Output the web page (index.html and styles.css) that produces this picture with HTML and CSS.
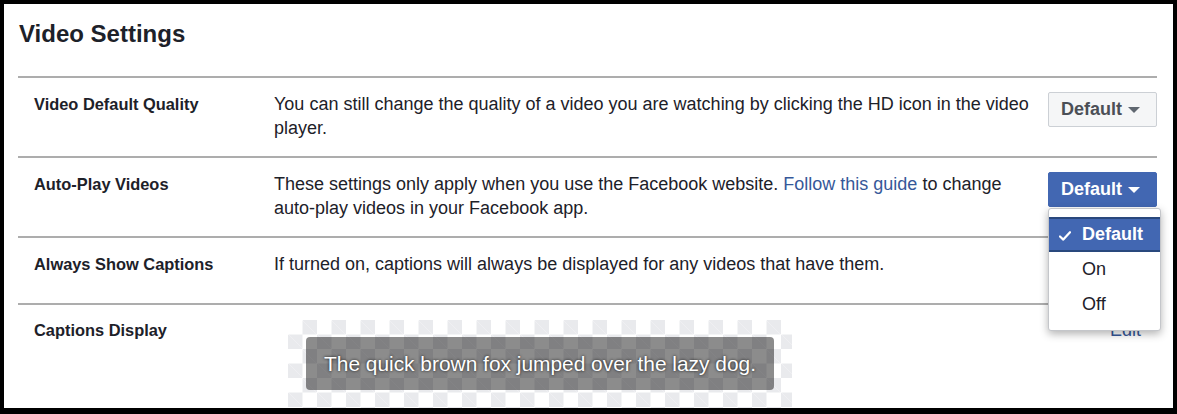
FILE: index.html
```html
<!DOCTYPE html>
<html lang="en">
<head>
<meta charset="utf-8">
<title>Video Settings</title>
<link rel="stylesheet" href="styles.css">
</head>
<body>
<div class="frame">
  <div class="settings">
    <h1 class="title">Video Settings</h1>

    <div class="row">
      <div class="label">Video Default Quality</div>
      <div class="desc">You can still change the quality of a video you are watching by clicking the HD icon in the video player.</div>
      <div class="control">
        <button class="btn btn-gray">Default<span class="caret"></span></button>
      </div>
    </div>

    <div class="row">
      <div class="label">Auto-Play Videos</div>
      <div class="desc">These settings only apply when you use the Facebook website. <a class="link" href="#">Follow this guide</a> to change auto-play videos in your Facebook app.</div>
      <div class="control has-menu">
        <button class="btn btn-blue">Default<span class="caret caret-white"></span></button>
        <ul class="menu">
          <li class="item selected">
            <svg class="check" width="12" height="10" viewBox="0 0 12 10"><path d="M1 5.5 L4.3 8.6 L11 1.2" fill="none" stroke="#fff" stroke-width="2.2" stroke-linecap="round" stroke-linejoin="round"/></svg>
            Default
          </li>
          <li class="item">On</li>
          <li class="item">Off</li>
        </ul>
      </div>
    </div>

    <div class="row">
      <div class="label">Always Show Captions</div>
      <div class="desc">If turned on, captions will always be displayed for any videos that have them.</div>
      <div class="control control-spacer"></div>
    </div>

    <div class="row row-last">
      <div class="label">Captions Display</div>
      <div class="preview-col">
        <div class="preview">
          <div class="caption">The quick brown fox jumped over the lazy dog.</div>
        </div>
      </div>
      <a class="edit" href="#">Edit</a>
    </div>
  </div>
</div>
</body>
</html>
```

FILE: styles.css
```css
html, body {
  margin: 0;
  padding: 0;
  background: #000;
  height: 414px;
  overflow: hidden;
}

body {
  font-family: "Liberation Sans", Arial, sans-serif;
  color: #1d2129;
}

.frame {
  margin: 4px 4px 0 4px;
  height: 404px;
  background: #fff;
  overflow: hidden;
}

.settings {
  padding: 16px 16px 0 14px;
}

.title {
  margin: 0 0 28px 1px;
  font-size: 24px;
  line-height: 28px;
  font-weight: bold;
  color: #1d2129;
}

.row {
  display: flex;
  align-items: flex-start;
  border-top: 2px solid #adadad;
  padding: 14px 0 16px 16px;
}

.label {
  width: 240px;
  flex: none;
  font-size: 16.4px;
  line-height: 24px;
  font-weight: bold;
  color: #1d2129;
}

.desc {
  width: 760px;
  flex: none;
  font-size: 18px;
  line-height: 24px;
  color: #1d2129;
}

.link {
  color: #365899;
  text-decoration: none;
}

.control {
  width: 109px;
  flex: none;
  margin-left: 14px;
  position: relative;
}

.control-spacer {
  height: 35px;
}

.btn {
  display: flex;
  align-items: center;
  width: 109px;
  height: 35px;
  box-sizing: border-box;
  padding: 0 0 0 12px;
  border-radius: 2px;
  font-family: "Liberation Sans", Arial, sans-serif;
  font-size: 18px;
  font-weight: bold;
  cursor: pointer;
}

.btn-gray {
  background: #f5f6f7;
  border: 1px solid #ccd0d5;
  color: #4b4f56;
}

.btn-blue {
  background: #4267b2;
  border: 1px solid #4267b2;
  color: #fff;
}

.caret {
  display: inline-block;
  width: 0;
  height: 0;
  margin-left: 6px;
  margin-top: 1px;
  border-left: 6px solid transparent;
  border-right: 6px solid transparent;
  border-top: 6px solid #606770;
}

.caret-white {
  border-top-color: #fff;
}

.menu {
  position: absolute;
  top: 36px;
  left: 0;
  width: 113px;
  box-sizing: border-box;
  margin: 0;
  padding: 8px 0;
  list-style: none;
  background: #fff;
  border: 1px solid #c4c6ca;
  border-radius: 3px;
  box-shadow: 0 3px 8px rgba(0, 0, 0, 0.3);
  z-index: 10;
}

.item {
  position: relative;
  height: 35px;
  box-sizing: border-box;
  padding-left: 33px;
  font-size: 18px;
  line-height: 35px;
  color: #1d2129;
}

.item.selected {
  background: #4267b2;
  border-top: 2px solid #29487d;
  border-bottom: 2px solid #29487d;
  line-height: 31px;
  color: #fff;
  font-weight: bold;
}

.check {
  position: absolute;
  left: 10px;
  top: 12px;
}

.row-last {
  padding-top: 13px;
}

.preview-col {
  flex: none;
  padding-left: 14px;
  padding-top: 2px;
}

.preview {
  width: 504px;
  height: 120px;
  padding-top: 17px;
  box-sizing: border-box;
  background-color: #fff;
  background-image:
    linear-gradient(45deg, #e9eaed 25%, transparent 25%, transparent 75%, #e9eaed 75%),
    linear-gradient(45deg, #e9eaed 25%, transparent 25%, transparent 75%, #e9eaed 75%);
  background-size: 29px 29px;
  background-position: 0 0, 14.5px 14.5px;
}

.caption {
  margin: 0 18px;
  height: 53px;
  border-radius: 4px;
  background: rgba(0, 0, 0, 0.45);
  color: #fff;
  font-size: 20.9px;
  line-height: 53px;
  text-align: center;
  text-shadow: 0 0 3px rgba(0, 0, 0, 0.9);
}

.edit {
  margin-left: auto;
  padding-right: 16px;
  font-size: 18px;
  line-height: 24px;
  color: #365899;
  text-decoration: none;
}
```
